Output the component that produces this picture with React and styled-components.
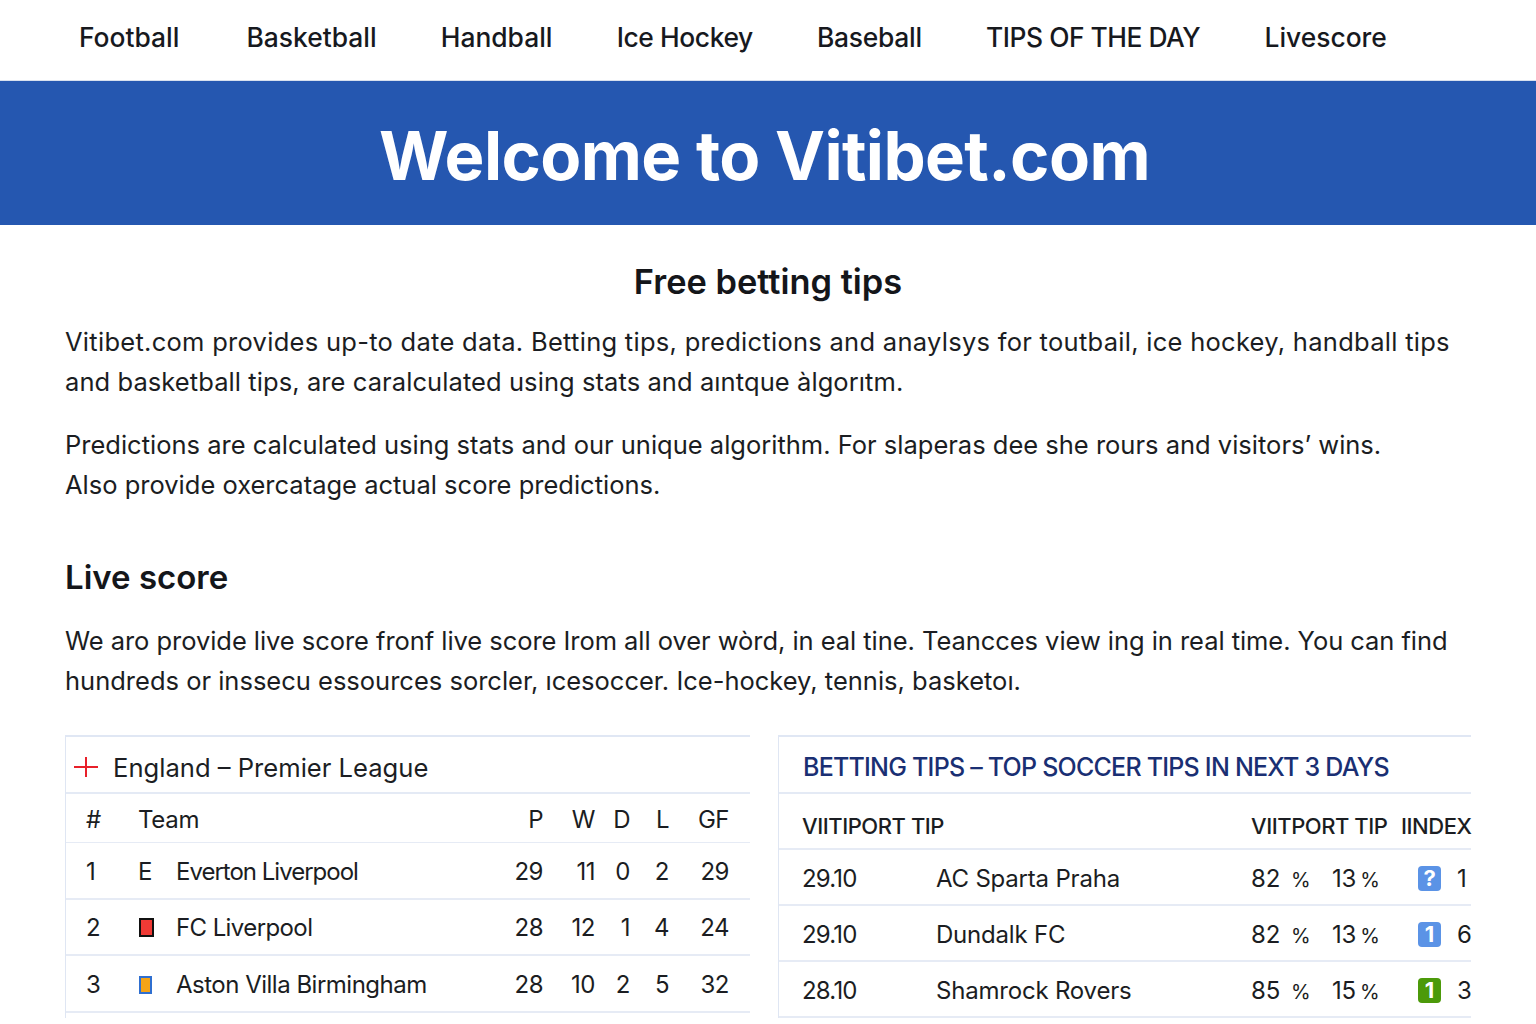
import React from "react";
import styled, { createGlobalStyle } from "styled-components";

const Global = createGlobalStyle`
  html, body { margin: 0; padding: 0; background: #fff; }
  body { font-family: Inter, "Liberation Sans", sans-serif; color: #16181d; overflow: hidden; height: 1024px; }
`;
const Nav = styled.nav`
  display: flex; align-items: center; padding: 0 0 6px 79px; gap: 64.2px;
  border-bottom: 1px solid #d8e0ee; box-sizing: border-box; height: 81px;
`;
const NavLink = styled.a`
  font-size: 26.4px; font-weight: 500; color: #17191e; white-space: nowrap;
  letter-spacing: ${p => p.$ls || 0}px;
  &:nth-child(2) { margin-left: 3px; }
`;
const Banner = styled.header`
  height: 144px; background: #2557b0; display: flex; align-items: center; justify-content: center;
`;
const BannerTitle = styled.h1`
  margin: 0; color: #fff; font-size: 67px; font-weight: 700; letter-spacing: -0.6px; padding: 5px 7px 0 0;
`;
const Main = styled.main`
  padding: 0 65px;
`;
const CenterHeading = styled.h2`
  margin: 0; padding-top: 36px; text-align: center; font-size: 34.4px; line-height: 42px; font-weight: 600; color: #14161a;
`;
const Para = styled.p`
  margin: ${p => p.$top || 0}px 0 0; font-size: 25.5px; line-height: 40px; white-space: nowrap; color: #1b1d22; font-weight: 400;
`;
const AdjustedLine = styled.span`
  letter-spacing: ${p => p.$ls}px;
`;
const SectionHeading = styled.h2`
  margin: 51px 0 0; font-size: 33px; line-height: 42px; font-weight: 600; color: #14161a;
`;
const Columns = styled.div`
  display: flex; gap: 28px; margin-top: 34px; margin-right: -1px;
`;
const Card = styled.section`
  width: ${p => p.$w}px; border-left: 1px solid #dfe6f3; border-top: 2px solid #e0e7f4; box-sizing: border-box;
`;
const CardTitle = styled.div`
  height: 55px; display: flex; align-items: center; border-bottom: 2px solid #e4eaf5;
`;
const LeagueTitle = styled.div`
  font-size: 25.6px; color: #1c1e23; margin-left: 15px; padding-top: 5px; white-space: nowrap;
`;
const PlusIcon = styled.svg`
  width: 24px; height: 20px; margin-left: 8px; margin-top: 5px; flex: none;
`;
const TipsTitle = styled.div`
  font-size: 25px; color: #1a2f73; margin-left: 24px; padding-top: 4px; font-weight: 500; letter-spacing: -0.77px; white-space: nowrap;
`;
const LeagueRow = styled.div`
  display: grid;
  grid-template-columns: 52px 38px 1fr 60px 52px 35px 39px 60px;
  height: ${p => p.$h}px; align-items: center; padding: 2px 21px 0 20px;
  border-bottom: ${p => p.$thin ? 1 : 2}px solid #e6ebf5;
  font-size: 24px; color: #1b1d22; letter-spacing: -0.3px;
`;
const Num = styled.span`
  text-align: right; white-space: nowrap; letter-spacing: -0.5px;
`;
const TeamName = styled.span`
  white-space: nowrap; letter-spacing: ${p => p.$ls}px;
`;
const Kit = styled.span`
  display: block; width: ${p => p.$w}px; height: ${p => p.$h}px; background: ${p => p.$fill};
  border: 2px solid ${p => p.$edge}; box-sizing: border-box; margin-left: 1px;
`;
const TipsRow = styled.div`
  display: grid;
  grid-template-columns: 134px 315px 81px 86px 39px 1fr;
  height: 52px; align-items: center; padding: 2px 0 0 23px;
  border-bottom: 2px solid #e6ebf5;
  font-size: 24px; color: #1b1d22; letter-spacing: -0.2px; white-space: nowrap;
`;
const TipsHeadRow = styled(TipsRow)`
  grid-template-columns: 449px 150px 1fr; font-weight: 500; font-size: 22px; letter-spacing: -0.45px;
  height: 45px; padding-top: 9px;
`;
const DateCell = styled.span`
  letter-spacing: -0.8px;
`;
const Pct = styled.span`
  display: inline-flex; gap: ${p => p.$gap}px; align-items: baseline;
`;
const PctSign = styled.span`
  font-size: 20px;
`;
const Badge = styled.span`
  width: 23px; height: 25px; border-radius: 4px; background: ${p => p.$bg}; color: #fff;
  font-size: 22px; font-weight: 700; display: flex; align-items: center; justify-content: center;
`;

const league = [
  { n: 1, team: "Everton Liverpool", ls: -1, v: [29, 11, 0, 2, 29], kit: <span>E</span> },
  { n: 2, team: "FC Liverpool", ls: -0.6, v: [28, 12, 1, 4, 24], kit: <Kit $w={15} $h={19} $fill="#f03a35" $edge="#111" /> },
  { n: 3, team: "Aston Villa Birmingham", ls: -0.5, v: [28, 10, 2, 5, 32], kit: <Kit $w={13} $h={18} $fill="#f5a417" $edge="#2f6fd0" /> },
];
const tips = [
  { d: "29.10", t: "AC Sparta Praha", a: "82", b: "13", s: "?", c: "#5b93e6", i: 1 },
  { d: "29.10", t: "Dundalk FC", a: "82", b: "13", s: "1", c: "#5b93e6", i: 6 },
  { d: "28.10", t: "Shamrock Rovers", a: "85", b: "15", s: "1", c: "#4c9a0a", i: 3 },
];
const navItems = [
  { label: "Football" },
  { label: "Basketball" },
  { label: "Handball" },
  { label: "Ice Hockey", ls: -0.4 },
  { label: "Baseball", ls: -0.25 },
  { label: "TIPS OF THE DAY", ls: -0.47 },
  { label: "Livescore" },
];

export default function App() {
  return (
    <>
      <Global />
      <Nav>{navItems.map(x => <NavLink key={x.label} $ls={x.ls}>{x.label}</NavLink>)}</Nav>
      <Banner><BannerTitle>Welcome to Vitibet.com</BannerTitle></Banner>
      <Main>
        <CenterHeading>Free betting tips</CenterHeading>
        <Para $top={19}>
          <AdjustedLine $ls={0.28}>Vitibet.com provides up-to date data. Betting tips, predictions and anaylsys for toutbail, ice hockey, handball tips</AdjustedLine><br />
          <AdjustedLine $ls={0.08}>and basketball tips, are caralculated using stats and aıntque àlgorıtm.</AdjustedLine>
        </Para>
        <Para $top={23}>Predictions are calculated using stats and our unique algorithm. For slaperas dee she rours and visitors’ wins.<br />Also provide oxercatage actual score predictions.</Para>
        <SectionHeading>Live score</SectionHeading>
        <Para $top={23}>
          <AdjustedLine $ls={-0.05}>We aro provide live score fronf live score Irom all over wòrd, in eal tine. Teancces view ing in real time. You can find</AdjustedLine><br />
          hundreds or inssecu essources sorcler, ıcesoccer. Ice-hockey, tennis, basketoı.
        </Para>
        <Columns>
          <Card $w={685}>
            <CardTitle>
              <PlusIcon viewBox="0 0 24 20"><path d="M0 10H24M12 0V20" stroke="#e8202a" strokeWidth="2" fill="none" /></PlusIcon>
              <LeagueTitle>England – Premier League</LeagueTitle>
            </CardTitle>
            <LeagueRow $h={46} $thin>
              <span>#</span><TeamName $ls={-0.3}>Team</TeamName><span />
              <Num>P</Num><Num>W</Num><Num>D</Num><Num>L</Num><Num>GF</Num>
            </LeagueRow>
            {league.map(r => (
              <LeagueRow $h={52.67} key={r.n}>
                <span>{r.n}</span>{r.kit}<TeamName $ls={r.ls}>{r.team}</TeamName>
                {r.v.map((x, i) => <Num key={i}>{x}</Num>)}
              </LeagueRow>
            ))}
          </Card>
          <Card $w={693}>
            <CardTitle><TipsTitle>BETTING TIPS – TOP SOCCER TIPS IN NEXT 3 DAYS</TipsTitle></CardTitle>
            <TipsHeadRow>
              <span>VIITIPORT TIP</span><span>VIITPORT TIP</span><span>IINDEX</span>
            </TipsHeadRow>
            {tips.map((r, i) => (
              <TipsRow key={i}>
                <DateCell>{r.d}</DateCell><span>{r.t}</span>
                <Pct $gap={11}>{r.a}<PctSign>%</PctSign></Pct>
                <Pct $gap={4}>{r.b}<PctSign>%</PctSign></Pct>
                <Badge $bg={r.c}>{r.s}</Badge><span>{r.i}</span>
              </TipsRow>
            ))}
          </Card>
        </Columns>
      </Main>
    </>
  );
}
